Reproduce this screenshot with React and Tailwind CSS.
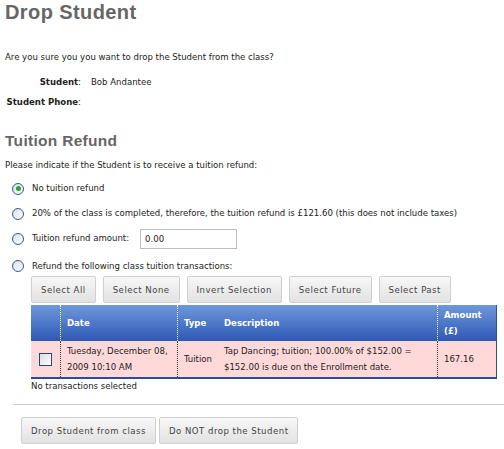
import { useState } from 'react';

const btn =
  'h-[27px] px-[9px] border border-[#cfcfcf] rounded-[2px] bg-gradient-to-b from-[#f7f7f7] to-[#e2e2e2] text-[#444] tracking-[0.5px] leading-[25px]';

function Radio({ checked, onClick }) {
  return (
    <span
      onClick={onClick}
      className="w-[12px] h-[12px] rounded-full border border-[#35578f] bg-gradient-to-br from-[#d9dee6] to-white flex items-center justify-center shrink-0 cursor-pointer"
    >
      {checked && <span className="w-[5px] h-[5px] rounded-full bg-[#2ca32c]" />}
    </span>
  );
}

export default function App() {
  const [choice, setChoice] = useState(0);
  const [amount, setAmount] = useState('0.00');
  const [checked, setChecked] = useState(false);

  return (
    <div className="w-[504px] h-[449px] overflow-hidden bg-white text-[#222] text-[9.5px] font-['DejaVu_Sans_Condensed','DejaVu_Sans',sans-serif]">
      <h1 className="pl-[5px] h-[24px] leading-[24px] text-[20px] font-bold text-[#666] tracking-[0.4px] font-['Liberation_Sans',Arial,sans-serif]">
        Drop Student
      </h1>

      <p className="mt-[26px] pl-[5px] leading-[14px]">
        Are you sure you you want to drop the Student from the class?
      </p>

      {/* Student details */}
      <div className="mt-[8px] grid grid-cols-[81px_1fr] gap-x-[10px] leading-[20px]">
        <div className="text-right">
          <span className="font-bold">Student</span>:
        </div>
        <div>Bob Andantee</div>
        <div className="text-right">
          <span className="font-bold">Student Phone</span>:
        </div>
        <div></div>
      </div>

      <h2 className="mt-[19px] pl-[5px] h-[20px] leading-[20px] text-[15.5px] font-bold text-[#666] tracking-[0.3px] font-['Liberation_Sans',Arial,sans-serif]">
        Tuition Refund
      </h2>

      <p className="mt-[7px] pl-[5px] leading-[14px]">
        Please indicate if the Student is to receive a tuition refund:
      </p>

      {/* Refund options */}
      <div className="mt-[4px] pl-[12px]">
        <div className="h-[25px] flex items-center gap-[8px]">
          <Radio checked={choice === 0} onClick={() => setChoice(0)} />
          <span>No tuition refund</span>
        </div>
        <div className="h-[25px] flex items-center gap-[8px]">
          <Radio checked={choice === 1} onClick={() => setChoice(1)} />
          <span>20% of the class is completed, therefore, the tuition refund is £121.60 (this does not include taxes)</span>
        </div>
        <div className="h-[25px] flex items-center gap-[8px]">
          <Radio checked={choice === 2} onClick={() => setChoice(2)} />
          <span>Tuition refund amount:</span>
          <input
            value={amount}
            onChange={(e) => setAmount(e.target.value)}
            className="ml-[3px] w-[97px] h-[20px] border border-[#bdbdbd] px-[4px] text-[9.5px] text-[#222] outline-none"
          />
        </div>
        <div className="mt-[5px] h-[20px] flex items-center gap-[8px]">
          <Radio checked={choice === 3} onClick={() => setChoice(3)} />
          <span>Refund the following class tuition transactions:</span>
        </div>
      </div>

      <div className="ml-[31px] mr-[7px]">
        <div className="flex gap-[7px]">
          <button className={btn}>Select All</button>
          <button className={btn}>Select None</button>
          <button className={btn}>Invert Selection</button>
          <button className={btn}>Select Future</button>
          <button className={btn}>Select Past</button>
        </div>

        {/* Transactions table */}
        <div className="mt-[2px] border-r border-b-2 border-[#2d4b97]">
          <div className="grid grid-cols-[29px_117px_43px_1fr_59px] h-[36px] bg-gradient-to-b from-[#6f98da] to-[#2f58b5] text-white font-bold">
            <div />
            <div className="border-l border-dotted border-white flex items-center px-[6px]">Date</div>
            <div className="border-l border-dotted border-white flex items-center px-[6px]">Type</div>
            <div className="flex items-center px-[4px]">Description</div>
            <div className="border-l border-dotted border-white flex items-center px-[6px] leading-[16px]">
              Amount
              <br />
              (£)
            </div>
          </div>
          <div className="grid grid-cols-[29px_117px_43px_1fr_59px] h-[36px] bg-[#ffd9d9] leading-[16px]">
            <div className="flex items-center justify-end pr-[8px]">
              <span
                onClick={() => setChecked(!checked)}
                className="w-[13px] h-[13px] border border-[#1f4a80] bg-gradient-to-br from-[#dcdcdc] to-white flex items-center justify-center cursor-pointer text-[9px] text-[#1f4a80]"
              >
                {checked ? '✓' : ''}
              </span>
            </div>
            <div className="border-l border-dotted border-[#333] flex items-center px-[6px]">
              Tuesday, December 08, 2009 10:10 AM
            </div>
            <div className="border-l border-dotted border-[#333] flex items-center px-[6px]">Tuition</div>
            <div className="flex items-center px-[4px]">
              Tap Dancing; tuition; 100.00% of $152.00 = $152.00 is due on the Enrollment date.
            </div>
            <div className="border-l border-dotted border-[#333] flex items-center px-[6px]">167.16</div>
          </div>
        </div>

        <p className="leading-[11px] mt-px">
          {checked ? '1 transaction selected' : 'No transactions selected'}
        </p>
      </div>

      <hr className="mt-[13px] ml-[13px] border-0 border-t border-[#cccccc]" />

      <div className="mt-[12px] ml-[21px] flex gap-[3px]">
        <button className={btn}>Drop Student from class</button>
        <button className={btn}>Do NOT drop the Student</button>
      </div>
    </div>
  );
}
